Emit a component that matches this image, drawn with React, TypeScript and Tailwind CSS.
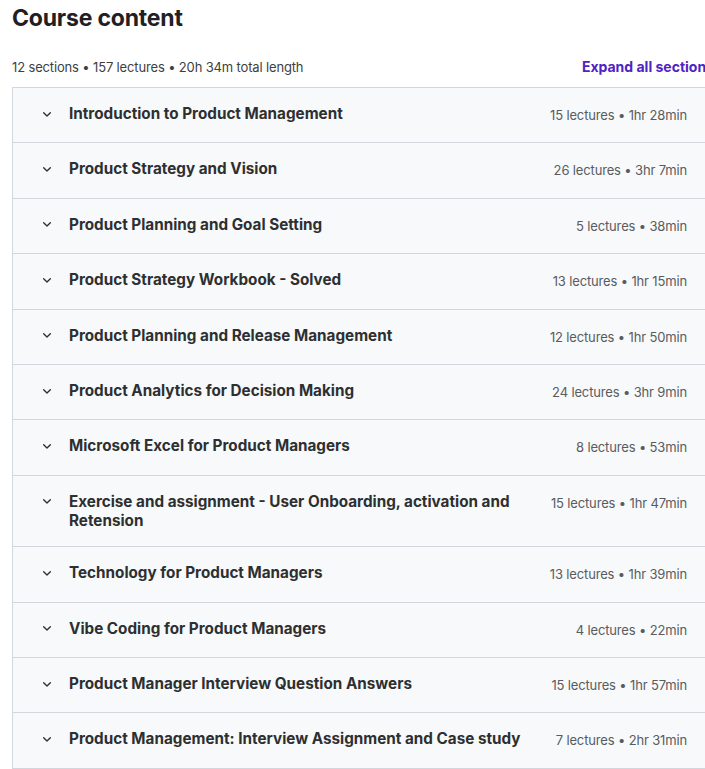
import React from "react";

type Section = { title: string; lectures: number; length: string };

const sections: Section[] = [
  { title: "Introduction to Product Management", lectures: 15, length: "1hr 28min" },
  { title: "Product Strategy and Vision", lectures: 26, length: "3hr 7min" },
  { title: "Product Planning and Goal Setting", lectures: 5, length: "38min" },
  { title: "Product Strategy Workbook - Solved", lectures: 13, length: "1hr 15min" },
  { title: "Product Planning and Release Management", lectures: 12, length: "1hr 50min" },
  { title: "Product Analytics for Decision Making", lectures: 24, length: "3hr 9min" },
  { title: "Microsoft Excel for Product Managers", lectures: 8, length: "53min" },
  {
    title: "Exercise and assignment - User Onboarding, activation and Retension",
    lectures: 15,
    length: "1hr 47min",
  },
  { title: "Technology for Product Managers", lectures: 13, length: "1hr 39min" },
  { title: "Vibe Coding for Product Managers", lectures: 4, length: "22min" },
  { title: "Product Manager Interview Question Answers", lectures: 15, length: "1hr 57min" },
  { title: "Product Management: Interview Assignment and Case study", lectures: 7, length: "2hr 31min" },
];

function Chevron() {
  return (
    <svg
      width="16"
      height="16"
      viewBox="0 0 24 24"
      fill="none"
      stroke="#2d2f31"
      strokeWidth="2"
      strokeLinecap="round"
      strokeLinejoin="round"
      className="shrink-0"
    >
      <path d="M7 10l5 5 5-5" />
    </svg>
  );
}

export default function App() {
  return (
    <div className="w-[705px] overflow-hidden bg-white" style={{ fontFamily: "Inter, 'Noto Sans', sans-serif" }}>
      <div className="w-[714px] pl-3">
        <h2 className="text-[23px] font-bold leading-[36px] text-[#1f2023] tracking-[-0.2px]">Course content</h2>
        <div className="mt-[20px] flex items-center justify-between pb-[9px]">
          <span className="text-[13px] leading-[22px] text-[#3d3f42] tracking-[-0.15px]">
            12 sections • 157 lectures • 20h 34m total length
          </span>
          <button className="text-[14px] font-bold leading-[22px] text-[#5022c3]">Expand all sections</button>
        </div>
        <div className="border border-[#d1d7dc] border-b-0">
          {sections.map((s) => (
            <div
              key={s.title}
              className="flex items-start border-b border-[#d1d7dc] bg-[#f7f9fa] py-4 pl-[26px] pr-[26px]"
            >
              <div className="mt-[1.5px]">
                <Chevron />
              </div>
              <div className="ml-[14px] flex-1 text-[15.25px] font-bold leading-[19.2px] text-[#2d2f31] pr-6">
                {s.title}
              </div>
              <div className="shrink-0 text-[13px] leading-[22.4px] text-[#595c5f] tracking-[-0.15px]">
                {s.lectures} lectures • {s.length}
              </div>
            </div>
          ))}
        </div>
      </div>
    </div>
  );
}
